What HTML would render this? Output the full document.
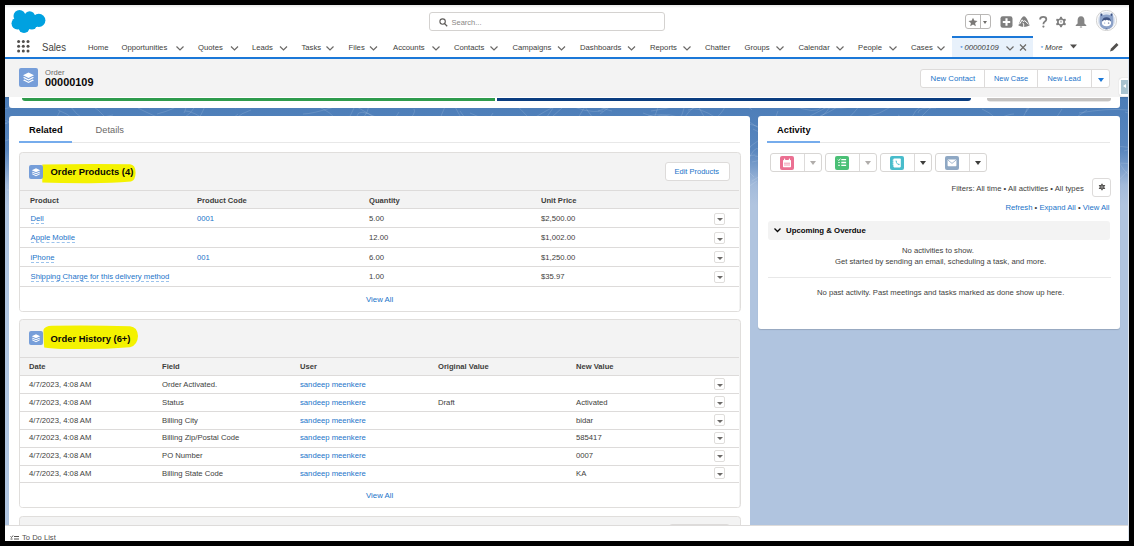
<!DOCTYPE html>
<html><head><meta charset="utf-8">
<style>
*{box-sizing:border-box;margin:0;padding:0}
html,body{width:1134px;height:546px;overflow:hidden;background:#000;font-family:"Liberation Sans",sans-serif;color:#3e3e3c}
.a{position:absolute}
#scr{position:absolute;left:5px;top:5px;width:1124px;height:536px;overflow:hidden;background:#b0c4df}
#in{position:absolute;left:-5px;top:-5px;width:1134px;height:546px}
#bg{left:0;top:90px;width:1134px;height:460px;background:linear-gradient(#4a7cb7 0px,#5080ba 30px,#5986be 60px,#7c9fcc 78px,#a3bbdb 95px,#b0c4df 115px)}
#gh{left:0;top:0;width:1134px;height:36px;background:linear-gradient(#e9ebeb 5px,#f2f3f3 6.5px,#fff 8px)}
#nav{left:0;top:36px;width:1134px;height:23px;background:#fff;border-bottom:2px solid #1b78d8}
#rh{left:0;top:59px;width:1134px;height:38px;background:#f3f3f3;box-shadow:0 1px 1.5px rgba(0,0,0,.12)}
.ni{position:absolute;top:43px;font-size:7.7px;color:#3e3e3c;white-space:nowrap}
.cv{position:absolute;top:45px;width:7px;height:5px}
.rl{position:absolute;background:#f3f3f3;border:1px solid #e0dedc;border-radius:3.5px;overflow:hidden}
.th{position:absolute;font-size:7.6px;font-weight:bold;color:#3e3e3c;white-space:nowrap}
.td{position:absolute;font-size:7.7px;color:#3e3e3c;white-space:nowrap}
.lk{color:#1a73c9}
.ul{border-bottom:1px dashed #9cc3ec;padding-bottom:0}
.hl{position:absolute;background:#f5f300;border-radius:5px}
.ln{position:absolute;height:1px;background:#dddbda}
.dd{position:absolute;margin-left:.8px;width:11.5px;height:12px;border:1px solid #dfdddb;border-radius:2px;background:#fff}
.dd:after{content:"";position:absolute;left:2px;top:4px;border-left:3.2px solid transparent;border-right:3.2px solid transparent;border-top:3.8px solid #6b6967;margin-top:.7px}
.bt{position:absolute;font-size:7.8px;color:#1a73c9;white-space:nowrap}
.ab{position:absolute;top:153px;width:52px;height:19px;border:1px solid #d8d6d4;border-radius:3px;background:#fff}
.ab i{position:absolute;left:33px;top:0;width:1px;height:17px;background:#dddbda}
.ai{position:absolute;left:9px;top:2px;width:14px;height:14px;border-radius:2px}
.tri{position:absolute;left:39px;top:7px;border-left:3.5px solid transparent;border-right:3.5px solid transparent;border-top:4px solid #3e3e3c}
</style></head><body>
<div id="scr"><div id="in">
  <div id="bg" class="a"></div>
  <svg class="a" style="left:0;top:0" width="1134" height="260"><path d="M508 155Q517 170 525 182M190 150Q202 153 230 163M78 181Q95 194 93 188M748 161Q754 146 759 149M196 123Q202 115 210 94M588 163Q606 159 626 163M1157 200Q1167 209 1184 229M314 105Q333 112 337 122M1110 184Q1122 173 1118 164M1137 139Q1152 118 1156 107M74 132Q75 145 92 169M90 104Q99 110 106 118M197 173Q201 157 221 144M223 126Q229 153 242 165M221 138Q225 162 245 166M224 124Q230 124 245 140M77 157Q89 146 107 137M1111 147Q1127 144 1156 155M1051 181Q1065 184 1069 169M204 195Q213 201 226 224M16 196Q27 191 48 173M680 128Q685 108 708 100M636 185Q656 182 660 192M-10 125Q-8 122 7 123M651 111Q682 107 695 96M793 158Q788 160 803 145M804 196Q811 184 819 162M349 200Q363 193 367 171M847 170Q862 189 883 200M1042 187Q1070 184 1084 178M714 137Q723 143 749 144M1152 188Q1169 197 1176 203M494 184Q496 168 517 149M542 121Q559 137 571 136M274 99Q286 84 309 81M1048 165Q1067 165 1094 159M206 142Q231 155 241 173M664 130Q681 125 685 105M816 195Q824 185 834 184M225 140Q236 152 256 150M1139 144Q1150 128 1147 130M813 156Q823 139 852 137M511 101Q512 100 528 117M719 144Q743 159 755 155M785 118Q785 117 806 117M820 116Q835 110 843 102M701 175Q730 161 743 164M1080 172Q1092 168 1099 148M418 156Q440 172 445 190M745 119Q767 134 783 141M224 190Q235 218 244 235M351 191Q352 200 369 211M625 176Q639 167 641 176M922 116Q934 100 961 99M585 172Q607 186 611 200M1099 107Q1108 101 1126 86M730 151Q738 162 754 177M976 190Q1002 176 1010 161M652 118Q670 110 684 121M1124 151Q1146 145 1165 140M792 105Q816 115 822 107M290 146Q306 142 309 123M537 130Q559 111 564 106M897 100Q910 89 914 85M393 161Q397 145 417 128M268 118Q281 118 298 120M600 114Q617 103 628 90M983 160Q995 175 998 178M1044 130Q1060 130 1087 110M1026 112Q1038 92 1059 88M960 141Q966 151 975 153M-9 118Q22 121 34 138M572 175Q585 167 611 176M96 102Q114 97 129 106M190 119Q215 129 224 155M44 195Q61 192 85 191M583 142Q595 151 598 146M186 144Q192 146 210 160M580 100Q597 124 605 134M719 139Q744 149 751 147M277 191Q301 201 313 214M1037 188Q1061 195 1074 207M830 105Q835 96 859 94M730 162Q753 144 769 133M755 156Q779 160 784 158M804 176Q810 188 811 190M275 139Q278 121 286 120M269 190Q294 194 301 194M1154 163Q1163 174 1167 175M24 193Q28 181 45 170M697 104Q705 119 712 130M405 127Q417 138 437 140M322 99Q322 100 336 90M434 190Q451 203 448 199M57 190Q83 183 89 185M593 194Q616 208 620 210M688 110Q697 105 718 119M598 111Q617 103 636 105M663 141Q686 160 689 162M844 122Q863 106 872 85M397 126Q415 136 429 141M866 117Q895 111 907 89M17 104Q32 88 42 89M615 105Q626 92 636 73M414 147Q429 145 435 130M58 110Q77 117 86 135M475 124Q488 144 496 143M357 154Q375 164 396 180M85 187Q91 179 95 172M786 128Q787 137 799 139M67 129Q80 132 101 149M396 172Q409 170 414 166M1063 194Q1077 203 1080 219M348 139Q355 156 371 179M405 135Q413 133 433 128M919 153Q924 171 943 178M1018 127Q1026 113 1032 97M1120 164Q1127 176 1133 176M70 106Q81 122 109 131M141 174Q147 184 163 182M591 176Q613 176 617 169M557 153Q583 161 592 173M953 166Q974 190 982 198M1110 163Q1136 163 1150 166M470 113Q489 120 512 140M213 141Q226 126 256 118M107 164Q106 170 123 177M665 191Q663 177 673 174M250 171Q255 169 272 176M175 175Q197 167 206 160M280 189Q288 209 295 211M544 121Q562 97 567 78M598 151Q622 133 640 125M-17 146Q8 142 24 133M157 114Q176 109 179 104M728 199Q735 196 757 181M-28 182Q-22 193 1 214M823 108Q847 109 854 106M990 129Q1010 130 1013 148M953 119Q963 128 987 123M341 130Q347 123 354 108M398 168Q406 166 415 145M957 165Q967 146 968 139M641 145Q657 116 660 99M703 128Q715 119 736 118M437 166Q451 157 455 154M1095 155Q1113 154 1117 169M138 108Q149 114 174 124M966 158Q965 141 979 139M454 105Q462 121 470 131M883 182Q894 168 908 175M447 169Q459 191 464 208M-8 132Q2 122 27 118M576 178Q582 197 602 204M1045 154Q1053 153 1075 143M1144 151Q1157 170 1183 173M716 118Q724 112 729 98M362 193Q369 197 391 183M131 190Q150 187 166 194M1052 199Q1058 218 1078 224M313 189Q334 173 342 169M622 106Q636 105 631 87M753 129Q770 139 791 146M927 100Q931 87 950 79M648 116Q661 113 672 117M734 102Q752 108 752 110M529 140Q553 151 567 151M548 199Q562 214 579 232M644 190Q659 199 677 192M352 104Q376 118 391 128M865 129Q866 130 882 133M568 138Q578 116 587 104M334 138Q350 143 349 128M762 186Q778 187 805 178M644 190Q649 173 669 155M1102 98Q1109 82 1122 83M1035 181Q1050 169 1062 174M7 190Q30 192 36 175M532 119Q561 102 574 97M967 134Q985 143 988 133M210 163Q218 139 244 132M834 130Q851 141 860 167M798 194Q801 189 816 191M816 118Q827 116 832 102M413 166Q419 176 435 194M1073 166Q1081 166 1105 147M494 152Q504 148 511 153M269 180Q281 164 282 159M302 154Q329 129 336 122M519 175Q542 162 565 162M632 164Q655 158 668 151M572 184Q596 185 602 198M898 115Q908 123 920 121M906 179Q913 171 932 160M564 102Q585 114 603 111M184 113Q189 98 197 84M283 179Q296 160 307 139M912 122Q911 109 929 103M709 152Q716 148 739 133M174 124Q194 115 201 95M43 140Q63 127 64 133M553 176Q556 190 560 194M17 123Q20 127 29 139M475 106Q491 88 497 61M244 124Q254 134 267 127M403 132Q401 147 418 166M743 104Q769 99 780 90M1025 145Q1044 145 1068 134M226 133Q232 116 251 110M225 146Q249 142 253 132M997 119Q1009 114 1014 114M297 100Q303 100 314 83M821 125Q839 119 840 119M881 172Q882 176 890 185M69 188Q89 171 107 171M439 122Q445 104 448 104M342 141Q356 138 361 143M833 166Q836 162 848 149M452 137Q455 143 467 155M227 102Q236 91 242 68M1131 128Q1147 142 1174 147M763 195Q773 196 778 213M479 138Q483 126 493 113M303 114Q312 114 334 107M255 107Q262 104 283 96M805 154Q809 155 819 162M45 139Q54 124 60 111M357 124Q371 113 369 99M282 166Q295 164 305 145M402 157Q414 178 422 193M459 140Q486 127 497 118M1052 102Q1059 87 1073 77M1133 113Q1145 100 1150 98M-29 153Q-18 154 -6 148M622 162Q653 162 666 168M383 188Q404 183 419 171M1117 182Q1129 170 1142 155M410 127Q418 132 438 146M357 116Q358 108 376 117M92 170Q106 157 110 145M163 186Q164 193 174 199M918 138Q932 140 938 150M367 175Q384 190 397 208M811 162Q819 174 841 192M767 122Q774 125 778 111M1125 112Q1141 116 1152 125M1081 199Q1082 172 1099 164M310 173Q311 172 318 190M616 147Q634 150 640 140M308 138Q337 142 348 150M796 154Q797 152 811 167M1081 124Q1087 114 1100 123M643 113Q650 116 667 120M405 124Q417 113 414 109M63 117Q82 123 113 115M546 140Q548 151 568 160M752 162Q780 159 793 137M497 183Q497 182 516 194M111 106Q127 99 150 92M-18 119Q-14 133 -11 133M913 173Q940 173 955 163M1143 108Q1154 116 1157 134M1052 100Q1062 100 1075 105M752 181Q767 170 787 169M1047 131Q1059 114 1062 109M854 154Q856 151 874 163M387 142Q391 123 399 112M609 195Q623 185 644 165M99 199Q117 193 147 191M810 116Q836 103 843 96M188 134Q195 141 196 153M736 120Q765 129 780 132M571 156Q588 137 597 120M762 141Q775 139 784 134M583 101Q600 108 612 111M1079 113Q1108 108 1128 110M847 199Q861 203 891 188M554 122Q576 142 580 149M919 150Q930 162 926 166M268 180Q292 172 302 177M303 164Q317 149 321 134M258 180Q273 204 285 211M918 113Q918 107 936 108M999 183Q1003 182 1012 166M704 190Q711 171 730 148M1013 172Q1026 150 1042 147M374 130Q388 138 398 138M185 111Q192 110 213 125M1090 160Q1110 160 1110 153M846 135Q852 131 872 122M475 182Q491 187 506 175M382 170Q392 167 411 149M311 185Q334 189 339 198M855 159Q861 154 872 157M495 195Q515 181 529 177M460 111Q465 118 474 131M946 185Q955 196 980 192M75 135Q98 126 114 123M1039 195Q1046 175 1054 161M523 130Q549 147 556 145M1151 138Q1169 162 1178 165M49 145Q62 150 86 136M219 136Q233 117 238 114M169 164Q183 176 208 176M840 177Q840 172 859 152M1094 189Q1100 178 1105 165M102 179Q109 172 131 163M124 107Q143 102 150 108M463 104Q476 93 487 84M982 109Q999 117 996 124M454 160Q468 169 485 198M153 181Q163 193 187 203M4 109Q28 105 47 87M25 140Q23 139 38 120M361 148Q392 158 404 165M566 190Q583 182 591 184M408 142Q420 140 435 140M29 183Q38 167 46 154M235 108Q247 99 260 100M862 148Q877 124 873 121" fill="none" stroke="rgba(255,255,255,.2)" stroke-width=".7"/></svg>
  <!-- global header -->
  <div id="gh" class="a">
    <svg class="a" style="left:0;top:0" width="60" height="36" viewBox="0 0 60 36">
      <g fill="#00a1e0">
        <circle cx="19.5" cy="16" r="6"/><circle cx="29.7" cy="16.5" r="5.3"/><circle cx="38.8" cy="20.3" r="6.6"/>
        <circle cx="17.5" cy="23.5" r="6"/><circle cx="24" cy="27.3" r="5.7"/><circle cx="31.8" cy="24.6" r="5"/>
        <rect x="17" y="15" width="20" height="12"/>
      </g>
    </svg>
    <div class="a" style="left:429px;top:12px;width:236px;height:19px;border:1px solid #d4d2d0;border-radius:3px;background:#fff">
      <svg class="a" style="left:9px;top:5px" width="9" height="9" viewBox="0 0 9 9"><circle cx="3.6" cy="3.6" r="2.7" fill="none" stroke="#5c5a58" stroke-width="1.1"/><path d="M5.6 5.6L8.2 8.2" stroke="#5c5a58" stroke-width="1.3"/></svg>
      <div class="a" style="left:21.5px;top:4.8px;font-size:7.5px;color:#8a8886">Search...</div>
    </div>
    <!-- favorites -->
    <div class="a" style="left:965px;top:14px;width:26px;height:15px;border:1px solid #b9b7b5;border-radius:3px;background:#fff">
      <div class="a" style="left:13.5px;top:0;width:1px;height:13px;background:#b9b7b5"></div>
      <svg class="a" style="left:2px;top:1.5px" width="10" height="10" viewBox="0 0 24 24"><path fill="#7a7876" d="M12 1.5l3.1 7.1 7.7.7-5.8 5.1 1.8 7.6L12 18l-6.8 4 1.8-7.6-5.8-5.1 7.7-.7z"/></svg>
      <div class="a" style="left:17px;top:5.5px;border-left:2.5px solid transparent;border-right:2.5px solid transparent;border-top:3px solid #706e6b"></div>
    </div>
    <svg class="a" style="left:999.5px;top:16px" width="13" height="12" viewBox="0 0 13 12"><rect x=".5" y=".3" width="12" height="11.4" rx="2.2" fill="#7f7f7f"/><path d="M6.5 2.3v7.4M2.8 6h7.4" stroke="#fff" stroke-width="2.1"/></svg>
    <svg class="a" style="left:1017.5px;top:16px" width="12" height="12" viewBox="0 0 12 12"><path d="M6 .3Q8.5 .6 10.8 7.2L11.6 9.6Q6 12.5 .4 9.6L1.2 7.2Q3.5 .6 6 .3Z" fill="#7f7f7f"/><path d="M1.5 8.2L4.2 3.8 5.6 5.8 6.6 4.6 10.5 8.2M4.5 6.8l1.2 1.2v3.5" fill="none" stroke="#fff" stroke-width="1"/></svg>
    <svg class="a" style="left:1038.5px;top:16px" width="9" height="12" viewBox="0 0 9 12"><path d="M1.1 3.4Q1.1 .9 4.2 .9Q7.3 .9 7.3 3.3Q7.3 4.7 5.9 5.6Q4.4 6.6 4.4 8.2" fill="none" stroke="#7f7f7f" stroke-width="1.8"/><circle cx="4.4" cy="10.6" r="1.1" fill="#7f7f7f"/></svg>
    <svg class="a" style="left:1055.3px;top:16.2px" width="12" height="12" viewBox="0 0 12 12"><path fill="#7f7f7f" d="M5.30 0.65 L6.70 0.65 L7.49 2.40 L8.37 2.91 L10.28 2.71 L10.99 3.93 L9.87 5.49 L9.87 6.51 L10.99 8.07 L10.28 9.29 L8.37 9.09 L7.49 9.60 L6.70 11.35 L5.30 11.35 L4.51 9.60 L3.63 9.09 L1.72 9.29 L1.01 8.07 L2.13 6.51 L2.13 5.49 L1.01 3.93 L1.72 2.71 L3.63 2.91 L4.51 2.40Z"/><circle cx="6" cy="6" r="2.3" fill="#fff"/><path d="M6 4.6v2" stroke="#7f7f7f" stroke-width="1"/></svg>
    <svg class="a" style="left:1074.5px;top:16px" width="12" height="12" viewBox="0 0 12 12"><path fill="#858585" d="M6 .3C3.6 .3 2.6 2.2 2.6 4.2v3.2L.6 9.2Q.5 9.9 1.2 9.9h9.6Q11.5 9.9 11.4 9.2L9.4 7.4V4.2C9.4 2.2 8.4 .3 6 .3z"/><rect x="4.8" y="10.4" width="2.4" height="1.2" rx=".6" fill="#858585"/></svg>
    <svg class="a" style="left:1096px;top:10px" width="21" height="21" viewBox="0 0 21 21">
      <circle cx="10.5" cy="10.5" r="10.1" fill="#fff" stroke="#c4c4c4" stroke-width=".8"/>
      <circle cx="10.5" cy="10.5" r="8.8" fill="#dde4ef"/>
      <path d="M3.6 12Q3.6 6 4.6 3.6Q5.8 3.2 6.8 5.2Q10.5 4 14.2 5.2Q15.2 3.2 16.4 3.6Q17.4 6 17.4 12Q17.4 19.3 10.5 19.3Q3.6 19.3 3.6 12Z" fill="#8ba1c8"/>
      <path d="M4.6 3.6Q5.8 3.2 6.6 5L5 6.2Z M16.4 3.6Q15.2 3.2 14.4 5L16 6.2Z" fill="#3e5382"/>
      <ellipse cx="10.5" cy="12.8" rx="4.6" ry="3.4" fill="#fff"/>
      <path d="M5.9 11.6Q6.5 7.2 10.5 7.2Q14.5 7.2 15.1 11.6Q13.5 9.6 12.2 10.6Q11 9 9.5 10.4Q8 9.4 5.9 11.6Z" fill="#3e5382"/>
      <ellipse cx="8.6" cy="13" rx=".7" ry=".5" fill="#8ba1c8"/><ellipse cx="12.6" cy="13" rx=".8" ry=".6" fill="#3e5382"/>
      <path d="M9 19.2Q10.5 17.6 12 19.2Z" fill="#3e5382"/>
    </svg>
  </div>
  <!-- nav -->
  <div id="nav" class="a">
    <div class="a" style="left:952px;top:1px;width:81px;height:20px;background:#e8f1fb"></div>
    <div class="a" style="left:952px;top:0;width:81px;height:2px;background:#1b78d8"></div>
  </div>
  <svg class="a" style="left:17px;top:40px" width="13" height="13" viewBox="0 0 13 13"><g fill="#514f4d">
    <circle cx="1.6" cy="1.6" r="1.5"/><circle cx="6.3" cy="1.6" r="1.5"/><circle cx="11" cy="1.6" r="1.5"/>
    <circle cx="1.6" cy="6.3" r="1.5"/><circle cx="6.3" cy="6.3" r="1.5"/><circle cx="11" cy="6.3" r="1.5"/>
    <circle cx="1.6" cy="11" r="1.5"/><circle cx="6.3" cy="11" r="1.5"/><circle cx="11" cy="11" r="1.5"/></g></svg>
  <div class="a" style="left:42.2px;top:40.7px;font-size:11px;color:#3e3e3c;transform-origin:0 0;transform:scaleX(.87)">Sales</div>
  <div class="ni" style="left:88px">Home</div>
  <div class="ni" style="left:121.5px">Opportunities</div>
  <div class="ni" style="left:198px">Quotes</div>
  <div class="ni" style="left:252px">Leads</div>
  <div class="ni" style="left:301.5px">Tasks</div>
  <div class="ni" style="left:348.5px">Files</div>
  <div class="ni" style="left:393px">Accounts</div>
  <div class="ni" style="left:454px">Contacts</div>
  <div class="ni" style="left:512.5px">Campaigns</div>
  <div class="ni" style="left:580px">Dashboards</div>
  <div class="ni" style="left:650px">Reports</div>
  <div class="ni" style="left:705px">Chatter</div>
  <div class="ni" style="left:744.5px">Groups</div>
  <div class="ni" style="left:798.5px">Calendar</div>
  <div class="ni" style="left:858px">People</div>
  <div class="ni" style="left:911px">Cases</div>
  <div class="ni" style="left:960px;font-style:italic"><span style="color:#1b78d8;font-size:6px;vertical-align:0">*</span> 00000109</div>
  <div class="ni" style="left:1040.5px;font-style:italic"><span style="color:#1b78d8;font-size:6px;vertical-align:0">*</span> More</div>
  <svg class="a" style="left:0;top:0" width="1134" height="60">
    <g fill="none" stroke="#6b6967" stroke-width="1.2" transform="translate(0 1)">
      <path d="M176.5 45.5l3.5 3.5 3.5-3.5M231 45.5l3.5 3.5 3.5-3.5M280 45.5l3.5 3.5 3.5-3.5M326.5 45.5l3.5 3.5 3.5-3.5M370 45.5l3.5 3.5 3.5-3.5M432.5 45.5l3.5 3.5 3.5-3.5M490.5 45.5l3.5 3.5 3.5-3.5M558 45.5l3.5 3.5 3.5-3.5M628 45.5l3.5 3.5 3.5-3.5M683.5 45.5l3.5 3.5 3.5-3.5M776.5 45.5l3.5 3.5 3.5-3.5M836.5 45.5l3.5 3.5 3.5-3.5M889.5 45.5l3.5 3.5 3.5-3.5M937.5 45.5l3.5 3.5 3.5-3.5M1006.5 45.5l3.5 3.5 3.5-3.5"/>
      <path d="M1020 43.5l6 6M1026 43.5l-6 6"/>
    </g>
    <path d="M1070 44.5h7l-3.5 4z" fill="#514f4d"/>
    <path d="M1110 51.5l1-3 5.5-5.5 2 2-5.5 5.5z" fill="#514f4d"/>
  </svg>
  <!-- record header -->
  <div id="rh" class="a"></div>
  <div class="a" style="left:19px;top:67.5px;width:19px;height:19px;border-radius:2px;background:#769ed9">
    <svg class="a" style="left:3px;top:3px" width="13" height="13" viewBox="0 0 13 13"><g fill="#fff"><path d="M6.5 1.5L12 4.2 6.5 6.9 1 4.2z"/><path d="M2.3 6.1L6.5 8.2l4.2-2.1 1.3.65-5.5 2.75L1 6.75z"/><path d="M2.3 8.6L6.5 10.7l4.2-2.1 1.3.65-5.5 2.75L1 9.25z"/></g></svg>
  </div>
  <div class="a" style="left:45px;top:68px;font-size:7.6px;color:#6b6967">Order</div>
  <div class="a" style="left:45px;top:75.9px;font-size:10.9px;font-weight:bold;color:#080707">00000109</div>
  <div class="a" style="left:920px;top:69px;width:190px;height:18.5px;border:1px solid #dddbda;border-radius:3px;background:#fff">
    <div class="a" style="left:62.5px;top:0;width:1px;height:17px;background:#dddbda"></div>
    <div class="a" style="left:115.5px;top:0;width:1px;height:17px;background:#dddbda"></div>
    <div class="a" style="left:169.5px;top:0;width:1px;height:17px;background:#dddbda"></div>
    <div class="bt" style="left:9.5px;top:4px">New Contact</div>
    <div class="bt" style="left:73px;top:4px;font-size:7.4px">New Case</div>
    <div class="bt" style="left:126.5px;top:4px;font-size:7.4px">New Lead</div>
    <div class="a" style="left:177px;top:8px;border-left:3.5px solid transparent;border-right:3.5px solid transparent;border-top:4px solid #1b78d8"></div>
  </div>
  <div class="a" style="left:1118.7px;top:77.7px;width:10px;height:18px;background:#fff;border-radius:3px 0 0 3px;box-shadow:0 0 1px rgba(0,0,0,.25)"><div class="a" style="left:2.5px;top:2.2px;width:7.5px;height:14px;background:#a9c3d0"></div><div class="a" style="left:4.5px;top:6.5px;border-top:2.5px solid transparent;border-bottom:2.5px solid transparent;border-right:3.5px solid #fff"></div></div>
  <!-- path card -->
  <div class="a" style="left:9px;top:97px;width:1111px;height:11px;background:#fff;border-radius:0 0 3px 3px"></div>
  <div class="a" style="left:22px;top:98px;width:473px;height:3px;background:#2e9b4c;border-radius:0 0 0 3px"></div>
  <div class="a" style="left:497px;top:98px;width:474px;height:3px;background:#0a3d80;border-radius:0 0 3px 0"></div>
  <div class="a" style="left:987px;top:97.5px;width:124px;height:3.5px;background:#c4c2c0;border-radius:0 0 3px 3px;box-shadow:0 .5px .5px rgba(0,0,0,.2)"></div>

  <!-- left main card -->
  <div class="a" style="left:9px;top:116px;width:741px;height:420px;background:#fff;border-radius:3px"></div>
  <div class="a" style="left:29px;top:125px;font-size:9.3px;font-weight:bold;color:#080707">Related</div>
  <div class="a" style="left:95.5px;top:125px;font-size:9.3px;color:#6b6967">Details</div>
  <div class="ln" style="left:19px;top:142px;width:721px;background:#e8e8e8"></div>
  <div class="a" style="left:19px;top:141px;width:53px;height:2px;background:#76acec"></div>

  <!-- Order products card -->
  <div class="rl" style="left:19px;top:152px;width:722px;height:160px">
    <div class="a" style="left:0;top:37px;width:719px;height:121px;background:#fff"></div>
    <div class="a" style="left:0;top:37px;width:719px;height:19px;background:#f3f3f3;border-top:1px solid #dddbda;border-bottom:1px solid #dddbda"></div>
  </div>
  <svg class="a" style="left:40px;top:162px" width="100" height="24" viewBox="0 0 100 24"><path d="M2.3 2.4Q50 1.6 90 2.2Q95.5 2.6 95.6 10.5Q95.5 18.4 91 19.6Q70 21.4 45 21.2Q20 21.2 2.3 20.6Z" fill="#f4f200"/></svg>
  <div class="a" style="left:29px;top:164.5px;width:14px;height:14px;border-radius:2px;background:#769ed9">
    <svg class="a" style="left:2px;top:2px" width="10" height="10" viewBox="0 0 13 13"><g fill="#fff"><path d="M6.5 1.5L12 4.2 6.5 6.9 1 4.2z"/><path d="M2.3 6.1L6.5 8.2l4.2-2.1 1.3.65-5.5 2.75L1 6.75z"/><path d="M2.3 8.6L6.5 10.7l4.2-2.1 1.3.65-5.5 2.75L1 9.25z"/></g></svg>
  </div>
  <div class="a" style="left:50.5px;top:166px;font-size:9.4px;font-weight:bold;color:#080707">Order Products (4)</div>
  <div class="a" style="left:665px;top:162px;width:65px;height:19px;border:1px solid #dddbda;border-radius:3px;background:#fff"></div>
  <div class="bt" style="left:674.5px;top:167px;font-size:7.5px">Edit Products</div>
  <div class="th" style="left:30px;top:196px">Product</div>
  <div class="th" style="left:197px;top:196px">Product Code</div>
  <div class="th" style="left:369px;top:196px">Quantity</div>
  <div class="th" style="left:541px;top:196px">Unit Price</div>
  <div class="ln" style="left:20px;top:227px;width:719px"></div>
  <div class="ln" style="left:20px;top:247px;width:719px"></div>
  <div class="ln" style="left:20px;top:266px;width:719px"></div>
  <div class="ln" style="left:20px;top:286px;width:719px"></div>
  <div class="td lk" style="left:30.5px;top:214px"><span class="ul">Dell</span></div>
  <div class="td lk" style="left:30.5px;top:233px"><span class="ul">Apple Mobile</span></div>
  <div class="td lk" style="left:30.5px;top:252.5px"><span class="ul">iPhone</span></div>
  <div class="td lk" style="left:30.5px;top:272px"><span class="ul">Shipping Charge for this delivery method</span></div>
  <div class="td lk" style="left:197px;top:214px">0001</div>
  <div class="td lk" style="left:197px;top:252.5px">001</div>
  <div class="td" style="left:369px;top:214px">5.00</div>
  <div class="td" style="left:369px;top:233px">12.00</div>
  <div class="td" style="left:369px;top:252.5px">6.00</div>
  <div class="td" style="left:369px;top:272px">1.00</div>
  <div class="td" style="left:541px;top:214px">$2,500.00</div>
  <div class="td" style="left:541px;top:233px">$1,002.00</div>
  <div class="td" style="left:541px;top:252.5px">$1,250.00</div>
  <div class="td" style="left:541px;top:272px">$35.97</div>
  <div class="dd" style="left:713px;top:212.5px"></div>
  <div class="dd" style="left:713px;top:232px"></div>
  <div class="dd" style="left:713px;top:251px"></div>
  <div class="dd" style="left:713px;top:270.5px"></div>
  <div class="bt" style="left:366px;top:295px">View All</div>

  <!-- Order history card -->
  <div class="rl" style="left:19px;top:319px;width:722px;height:189px">
    <div class="a" style="left:0;top:37px;width:719px;height:150px;background:#fff"></div>
    <div class="a" style="left:0;top:37px;width:719px;height:19px;background:#f3f3f3;border-top:1px solid #dddbda;border-bottom:1px solid #dddbda"></div>
  </div>
  <svg class="a" style="left:40px;top:323px" width="102" height="29" viewBox="0 0 102 29"><path d="M3.4 7Q4.6 3 12 2.8Q50 2.2 90 3.2Q97.6 4 98 13Q97.6 22.4 90 24.2Q60 26.6 30 26Q10 25.8 4.2 24.4Q3.4 15 3.4 7Z" fill="#f4f200"/></svg>
  <div class="a" style="left:29px;top:331px;width:14px;height:14px;border-radius:2px;background:#769ed9">
    <svg class="a" style="left:2px;top:2px" width="10" height="10" viewBox="0 0 13 13"><g fill="#fff"><path d="M6.5 1.5L12 4.2 6.5 6.9 1 4.2z"/><path d="M2.3 6.1L6.5 8.2l4.2-2.1 1.3.65-5.5 2.75L1 6.75z"/><path d="M2.3 8.6L6.5 10.7l4.2-2.1 1.3.65-5.5 2.75L1 9.25z"/></g></svg>
  </div>
  <div class="a" style="left:50.5px;top:333px;font-size:9.4px;font-weight:bold;color:#080707">Order History (6+)</div>
  <div class="th" style="left:29px;top:362px">Date</div>
  <div class="th" style="left:162px;top:362px">Field</div>
  <div class="th" style="left:300px;top:362px">User</div>
  <div class="th" style="left:438px;top:362px">Original Value</div>
  <div class="th" style="left:576px;top:362px">New Value</div>
  <div class="ln" style="left:20px;top:393px;width:719px"></div>
  <div class="ln" style="left:20px;top:411px;width:719px"></div>
  <div class="ln" style="left:20px;top:428.5px;width:719px"></div>
  <div class="ln" style="left:20px;top:446.5px;width:719px"></div>
  <div class="ln" style="left:20px;top:464.5px;width:719px"></div>
  <div class="ln" style="left:20px;top:482px;width:719px"></div>
  <div class="td" style="left:29px;top:379.5px">4/7/2023, 4:08 AM</div>
  <div class="td" style="left:162px;top:379.5px">Order Activated.</div>
  <div class="td lk" style="left:300px;top:379.5px">sandeep meenkere</div>
  <div class="dd" style="left:713px;top:378px"></div>
  <div class="td" style="left:29px;top:397.5px">4/7/2023, 4:08 AM</div>
  <div class="td" style="left:162px;top:397.5px">Status</div>
  <div class="td lk" style="left:300px;top:397.5px">sandeep meenkere</div>
  <div class="td" style="left:438px;top:397.5px">Draft</div>
  <div class="td" style="left:576px;top:397.5px">Activated</div>
  <div class="dd" style="left:713px;top:396px"></div>
  <div class="td" style="left:29px;top:415.5px">4/7/2023, 4:08 AM</div>
  <div class="td" style="left:162px;top:415.5px">Billing City</div>
  <div class="td lk" style="left:300px;top:415.5px">sandeep meenkere</div>
  <div class="td" style="left:576px;top:415.5px">bidar</div>
  <div class="dd" style="left:713px;top:414px"></div>
  <div class="td" style="left:29px;top:433.0px">4/7/2023, 4:08 AM</div>
  <div class="td" style="left:162px;top:433.0px">Billing Zip/Postal Code</div>
  <div class="td lk" style="left:300px;top:433.0px">sandeep meenkere</div>
  <div class="td" style="left:576px;top:433.0px">585417</div>
  <div class="dd" style="left:713px;top:431.5px"></div>
  <div class="td" style="left:29px;top:451.0px">4/7/2023, 4:08 AM</div>
  <div class="td" style="left:162px;top:451.0px">PO Number</div>
  <div class="td lk" style="left:300px;top:451.0px">sandeep meenkere</div>
  <div class="td" style="left:576px;top:451.0px">0007</div>
  <div class="dd" style="left:713px;top:449.5px"></div>
  <div class="td" style="left:29px;top:468.5px">4/7/2023, 4:08 AM</div>
  <div class="td" style="left:162px;top:468.5px">Billing State Code</div>
  <div class="td lk" style="left:300px;top:468.5px">sandeep meenkere</div>
  <div class="td" style="left:576px;top:468.5px">KA</div>
  <div class="dd" style="left:713px;top:467px"></div>
  <div class="bt" style="left:366px;top:491px">View All</div>
  <div class="rl" style="left:19px;top:515.5px;width:722px;height:40px"></div>
  <div class="a" style="left:669px;top:523.5px;width:61px;height:6px;border:1px solid #dddbda;border-radius:3px;background:#fff"></div>
  <!-- footer -->
  <div class="a" style="left:0;top:525px;width:1134px;height:21px;background:#fff;border-top:1px solid #dddbda"></div>
  <svg class="a" style="left:9.5px;top:535px" width="9" height="8" viewBox="0 0 9 8"><g stroke="#514f4d" stroke-width="1" fill="none"><path d="M0.5 1.5l1 1 1.5-2M4 1.5h5M4 4h5M4 6.5h5M0.5 4h2M0.5 6.5h2"/></g></svg>
  <div class="a" style="left:22px;top:533px;font-size:7.6px;color:#514f4d">To Do List</div>
  <div class="a" style="left:1127.5px;top:59px;width:1.5px;height:482px;background:#dfe6ef"></div>

  <!-- activity card -->
  <div class="a" style="left:758px;top:116px;width:362px;height:212.5px;background:#fff;border-radius:3px;box-shadow:0 1px 1px rgba(0,0,0,.15)"></div>
  <div class="a" style="left:777px;top:125px;font-size:9.3px;font-weight:bold;color:#080707">Activity</div>
  <div class="ln" style="left:767px;top:142px;width:343px;background:#e8e8e8"></div>
  <div class="a" style="left:767px;top:141px;width:53px;height:2px;background:#76acec"></div>
  <div class="ab" style="left:770px"><i></i><div class="ai" style="background:#eb7092"><svg width="14" height="14" viewBox="0 0 14 14"><g fill="#fff"><rect x="3" y="4" width="8" height="7.2" rx=".6"/><rect x="4" y="2.6" width="1.2" height="2" rx=".4"/><rect x="8.8" y="2.6" width="1.2" height="2" rx=".4"/></g><path d="M4 7.2h6M4 9h6" stroke="#eb7092" stroke-width=".7"/></svg></div><div class="tri" style="border-top-color:#b0adab"></div></div>
  <div class="ab" style="left:825px"><i></i><div class="ai" style="background:#4bc076"><svg width="14" height="14" viewBox="0 0 14 14"><g fill="none" stroke="#fff"><path d="M2.8 3.6l1 1 1.6-2" stroke-width=".9"/><path d="M6.3 3.6h4.8M6.3 6.5h4.8M6.3 9.4h4.8" stroke-width="1.3"/><path d="M3.3 6.5h1.4M3.3 9.4h1.4" stroke-width="1.1"/></g></svg></div><div class="tri" style="border-top-color:#b0adab"></div></div>
  <div class="ab" style="left:880px"><i></i><div class="ai" style="background:#48bccb"><svg width="14" height="14" viewBox="0 0 14 14"><rect x="3.4" y="2.6" width="7.4" height="8.8" rx=".8" fill="#fff"/><path d="M2.6 4.2h1.4M2.6 6.2h1.4M2.6 8.2h1.4" stroke="#fff" stroke-width=".8"/><path d="M5.6 4.6q0 3.4 3.4 4.6l.8-.9-1-.8-.6.5q-1.3-.7-1.7-1.9l.5-.5-.7-1z" fill="#48bccb"/></svg></div><div class="tri"></div></div>
  <div class="ab" style="left:935px"><i></i><div class="ai" style="background:#8fa8c4"><svg width="14" height="14" viewBox="0 0 14 14"><rect x="2.6" y="3.6" width="8.8" height="6.6" rx=".6" fill="#fff"/><path d="M2.8 4l4.2 3.4 4.2-3.4" fill="none" stroke="#8fa8c4" stroke-width=".8"/></svg></div><div class="tri"></div></div>
  <div class="td" style="left:951.5px;top:184px">Filters: All time • All activities • All types</div>
  <div class="a" style="left:1091.5px;top:178px;width:19px;height:18.5px;border:1px solid #dddbda;border-radius:3px;background:#fff"><svg class="a" style="left:5px;top:4.3px" width="8" height="8" viewBox="0 0 8 8"><path fill="#514f4d" d="M4 .2L5.1 2.1 7.3 2.1 6.2 4 7.3 5.9 5.1 5.9 4 7.8 2.9 5.9 .7 5.9 1.8 4 .7 2.1 2.9 2.1z"/><circle cx="4" cy="4" r="1.6" fill="#888"/></svg></div>
  <div class="td lk" style="left:1005.5px;top:203px">Refresh <span style="color:#3e3e3c">•</span> Expand All <span style="color:#3e3e3c">•</span> View All</div>
  <div class="a" style="left:767.5px;top:221px;width:342px;height:18.5px;background:#f3f3f3;border-radius:3px"></div>
  <svg class="a" style="left:773.5px;top:228px" width="7" height="5" viewBox="0 0 7 5"><path d="M0.5 0.5l3 3 3-3" fill="none" stroke="#080707" stroke-width="1.3"/></svg>
  <div class="th" style="left:786px;top:226.2px;font-size:7.8px;color:#080707">Upcoming &amp; Overdue</div>
  <div class="td" style="left:902px;top:246px">No activities to show.</div>
  <div class="td" style="left:835px;top:257px">Get started by sending an email, scheduling a task, and more.</div>
  <div class="ln" style="left:767.5px;top:277px;width:343px;background:#e8e8e8"></div>
  <div class="td" style="left:817px;top:288px">No past activity. Past meetings and tasks marked as done show up here.</div>
</div></div>
</body></html>
